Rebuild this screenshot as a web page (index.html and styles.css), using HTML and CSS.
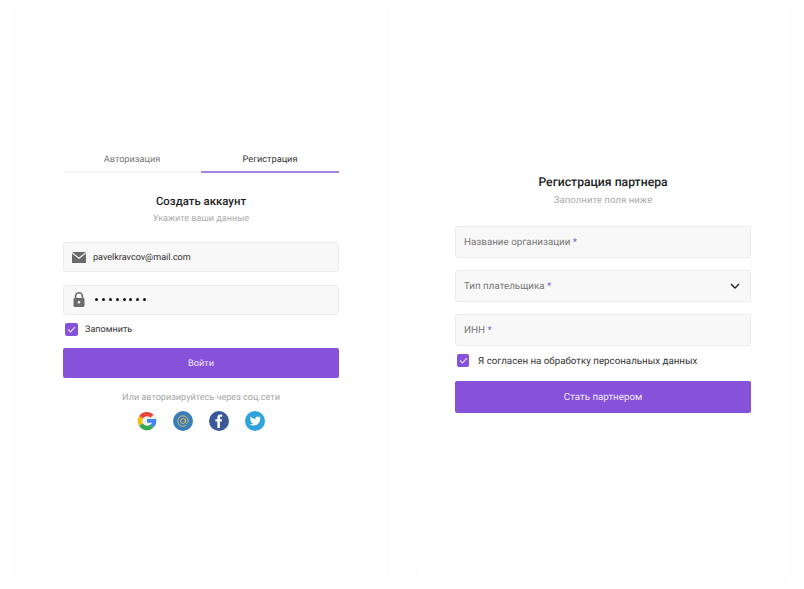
FILE: index.html
```html
<!DOCTYPE html>
<html lang="ru">
<head>
  <meta charset="UTF-8">
  <meta name="viewport" content="width=device-width, initial-scale=1.0">
  <title>Регистрация</title>
  <link rel="stylesheet" href="styles.css">
</head>
<body>

  <div class="page">

    <!-- Login card -->
    <div class="card">
      <div class="form form-login">
        <div class="tabs">
          <div class="tab">Авторизация</div>
          <div class="tab active">Регистрация</div>
        </div>

        <h2 class="title">Создать аккаунт</h2>
        <p class="subtitle">Укажите ваши данные</p>

        <div class="field field-email">
          <svg class="field-icon" width="14" height="11" viewBox="0 0 14 11">
            <path d="M0 0H14L7 5.6Z" fill="#6b6b6b"/>
            <path d="M0 1.4L7 7L14 1.4V11H0Z" fill="#6b6b6b"/>
          </svg>
          <span class="value">pavelkravcov@mail.com</span>
        </div>

        <div class="field field-pass">
          <svg class="field-icon lock" width="12" height="15" viewBox="0 0 12 15">
            <path d="M2.6 6.5V4.2a3.4 3.4 0 0 1 6.8 0V6.5" fill="none" stroke="#6b6b6b" stroke-width="1.6"/>
            <rect x="0.5" y="6" width="11" height="9" rx="1.4" fill="#6b6b6b"/>
            <circle cx="6" cy="10.2" r="1.2" fill="#f8f8f8"/>
          </svg>
          <span class="dots"><i></i><i></i><i></i><i></i><i></i><i></i><i></i><i></i></span>
        </div>

        <label class="check">
          <span class="box">
            <svg width="9" height="7" viewBox="0 0 9 7"><path d="M1 3.4L3.4 5.8L8 1.2" fill="none" stroke="#e6dcf7" stroke-width="1.2"/></svg>
          </span>
          <span class="check-text">Запомнить</span>
        </label>

        <button class="btn">Войти</button>

        <p class="social-text">Или авторизируйтесь через соц.сети</p>

        <div class="social">
          <svg width="20" height="20" viewBox="0 0 20 20">
            <circle cx="10" cy="10" r="9.6" fill="#efefef"/>
            <path d="M14.9 5.2A7 7 0 0 0 4 6.4" fill="none" stroke="#ea4335" stroke-width="4.4"/>
            <path d="M4 6.4A7 7 0 0 0 4 13.6" fill="none" stroke="#fbbc05" stroke-width="4.4"/>
            <path d="M4 13.6A7 7 0 0 0 15 15" fill="none" stroke="#34a853" stroke-width="4.4"/>
            <path d="M10 8H19.2C19.7 11 19 14 16.6 16.3L13.4 13.8C14.2 13.2 14.7 12.6 15 11.8H10Z" fill="#4285f4"/>
          </svg>
          <svg width="20" height="20" viewBox="0 0 20 20">
            <circle cx="10" cy="10" r="10" fill="#3b7fb8"/>
            <circle cx="10" cy="10" r="2.4" fill="none" stroke="#d9b36a" stroke-width="1"/>
            <path d="M12.4 7.6V11.2C12.4 13 15.2 12.6 15.2 10A5.2 5.2 0 1 0 13 14.3" fill="none" stroke="#d9b36a" stroke-width="1"/>
          </svg>
          <svg width="20" height="20" viewBox="0 0 20 20">
            <circle cx="10" cy="10" r="10" fill="#3b5998"/>
            <path d="M10.9 17V10.6H12.8L13.1 8.3H10.9V6.9C10.9 6.2 11.1 5.8 12 5.8H13.2V3.7C13 3.7 12.3 3.6 11.4 3.6C9.6 3.6 8.4 4.7 8.4 6.7V8.3H6.4V10.6H8.4V17Z" fill="#fff"/>
          </svg>
          <svg width="20" height="20" viewBox="0 0 20 20">
            <circle cx="10" cy="10" r="10" fill="#2fa3dc"/>
            <path d="M16 6.4C15.5 6.6 15 6.8 14.5 6.8C15 6.5 15.4 6 15.6 5.4C15.1 5.7 14.6 5.9 14 6C12.8 4.8 10.4 5.6 10.4 7.4C10.4 7.7 10.4 7.9 10.5 8.1C8.4 8 6.6 7 5.4 5.5C4.8 6.6 5.1 7.9 6.1 8.6C5.7 8.6 5.3 8.5 5 8.3C5 9.5 5.8 10.5 6.9 10.7C6.6 10.8 6.2 10.8 5.9 10.8C6.2 11.7 7.1 12.4 8.1 12.4C7 13.2 5.8 13.6 4.4 13.4C8.8 16.2 15.2 13.8 15 7.7C15.4 7.4 15.7 7 16 6.4Z" fill="#fff"/>
          </svg>
        </div>
      </div>
    </div>

    <!-- Partner card -->
    <div class="card">
      <div class="form form-partner">
        <h2 class="title">Регистрация партнера</h2>
        <p class="subtitle">Заполните поля ниже</p>

        <div class="field">
          <span class="placeholder">Название организации <b>*</b></span>
        </div>

        <div class="field field-select">
          <span class="placeholder">Тип плательщика <b>*</b></span>
          <svg width="10" height="6" viewBox="0 0 10 6"><path d="M1 1L5 5L9 1" fill="none" stroke="#222" stroke-width="1.4"/></svg>
        </div>

        <div class="field">
          <span class="placeholder">ИНН <b>*</b></span>
        </div>

        <label class="check">
          <span class="box">
            <svg width="9" height="7" viewBox="0 0 9 7"><path d="M1 3.4L3.4 5.8L8 1.2" fill="none" stroke="#e6dcf7" stroke-width="1.2"/></svg>
          </span>
          <span class="check-text">Я согласен на обработку персональных данных</span>
        </label>

        <button class="btn">Стать партнером</button>
      </div>
    </div>

  </div>

</body>
</html>
```

FILE: styles.css
```css
body {
  font-family: Roboto, "Liberation Sans", sans-serif;
  text-rendering: geometricPrecision;
  background-color: #fff;
  margin: 0;
  padding: 0;
}

.page {
  display: flex;
  gap: 32px;
  height: 589px;
  box-sizing: border-box;
  padding: 5px 16px 11px;
  overflow: hidden;
}

.card {
  width: 370px;
  display: flex;
  flex-direction: column;
  justify-content: center;
  background-color: #fff;
  border-radius: 6px;
  box-shadow: 0 2px 10px rgba(0, 0, 0, 0.025);
}

.form-login {
  padding: 0 47px 2px;
}

.form-partner {
  padding: 5px 37px 1px;
}

/* Tabs */
.tabs {
  display: flex;
  margin-bottom: 20px;
  border-bottom: 2px solid #f6f6f6;
}

.tab {
  flex: 1;
  height: 20px;
  margin-bottom: -2px;
  border-bottom: 2px solid transparent;
  text-align: center;
  font-size: 9.2px;
  line-height: 17px;
  color: #777;
}

.tab.active {
  color: #333;
  border-bottom-color: #a583e0;
}

.title {
  margin: 0;
  text-align: center;
  font-size: 11.4px;
  line-height: 16px;
  font-weight: 500;
  color: #1e1e1e;
}

.form-partner .title {
  font-size: 12.2px;
}

.subtitle {
  margin: 3px 0 0;
  text-align: center;
  font-size: 9.1px;
  line-height: 14px;
  color: #ababab;
}

.form-partner .subtitle {
  font-size: 9.7px;
  margin: 4px 0 18px;
}

.form-login .subtitle {
  margin-bottom: 16px;
}

/* Fields */
.field {
  display: flex;
  align-items: center;
  box-sizing: border-box;
  height: 30px;
  margin-bottom: 13px;
  padding: 0 8px;
  background-color: #f8f8f8;
  border: 1px solid #ececec;
  border-radius: 3px;
}

.field-email {
  padding-top: 2px;
}

.field-icon {
  flex: none;
  margin-right: 7px;
}

.field-icon.lock {
  margin-right: 10px;
  margin-left: 1px;
}

.value {
  font-size: 9.05px;
  color: #333;
}

.dots {
  display: flex;
  gap: 3.9px;
}

.dots i {
  width: 3px;
  height: 3px;
  border-radius: 50%;
  background-color: #111;
}

.form-partner .field {
  height: 32px;
  margin-bottom: 12px;
}

.field-select {
  justify-content: space-between;
}

.field-select svg {
  margin-right: 2px;
}

.placeholder {
  font-size: 9.8px;
  color: #777;
}

.placeholder b {
  font-weight: 400;
  color: #8652da;
}

/* Checkbox */
.check {
  display: flex;
  align-items: flex-start;
  margin: -5px 0 12px 2px;
  font-size: 9.07px;
  line-height: 13px;
  color: #333;
  cursor: pointer;
}

.check-text {
  padding-top: 1px;
  margin-bottom: -1px;
}

.box {
  display: flex;
  align-items: center;
  justify-content: center;
  width: 13px;
  height: 13px;
  margin-right: 7px;
  border-radius: 2px;
  background-color: #8652da;
}

.form-partner .check {
  margin: -4px 0 14px 2px;
  font-size: 9.76px;
}

.form-partner .box {
  width: 12px;
  margin-right: 9px;
}

.btn {
  display: block;
  width: 100%;
  height: 30px;
  padding: 2px 0 0;
  font-family: inherit;
  text-rendering: inherit;
  font-size: 9.15px;
  border: none;
  border-radius: 2px;
  color: #f1eafb;
  background-color: #8652da;
  cursor: pointer;
}

.form-partner .btn {
  height: 32px;
  padding: 0;
  font-size: 9.75px;
}

.social-text {
  margin: 13px 0 6px;
  text-align: center;
  font-size: 9.1px;
  line-height: 14px;
  color: #a5a5a5;
}

.social {
  display: flex;
  justify-content: center;
  gap: 16.3px;
}
```
